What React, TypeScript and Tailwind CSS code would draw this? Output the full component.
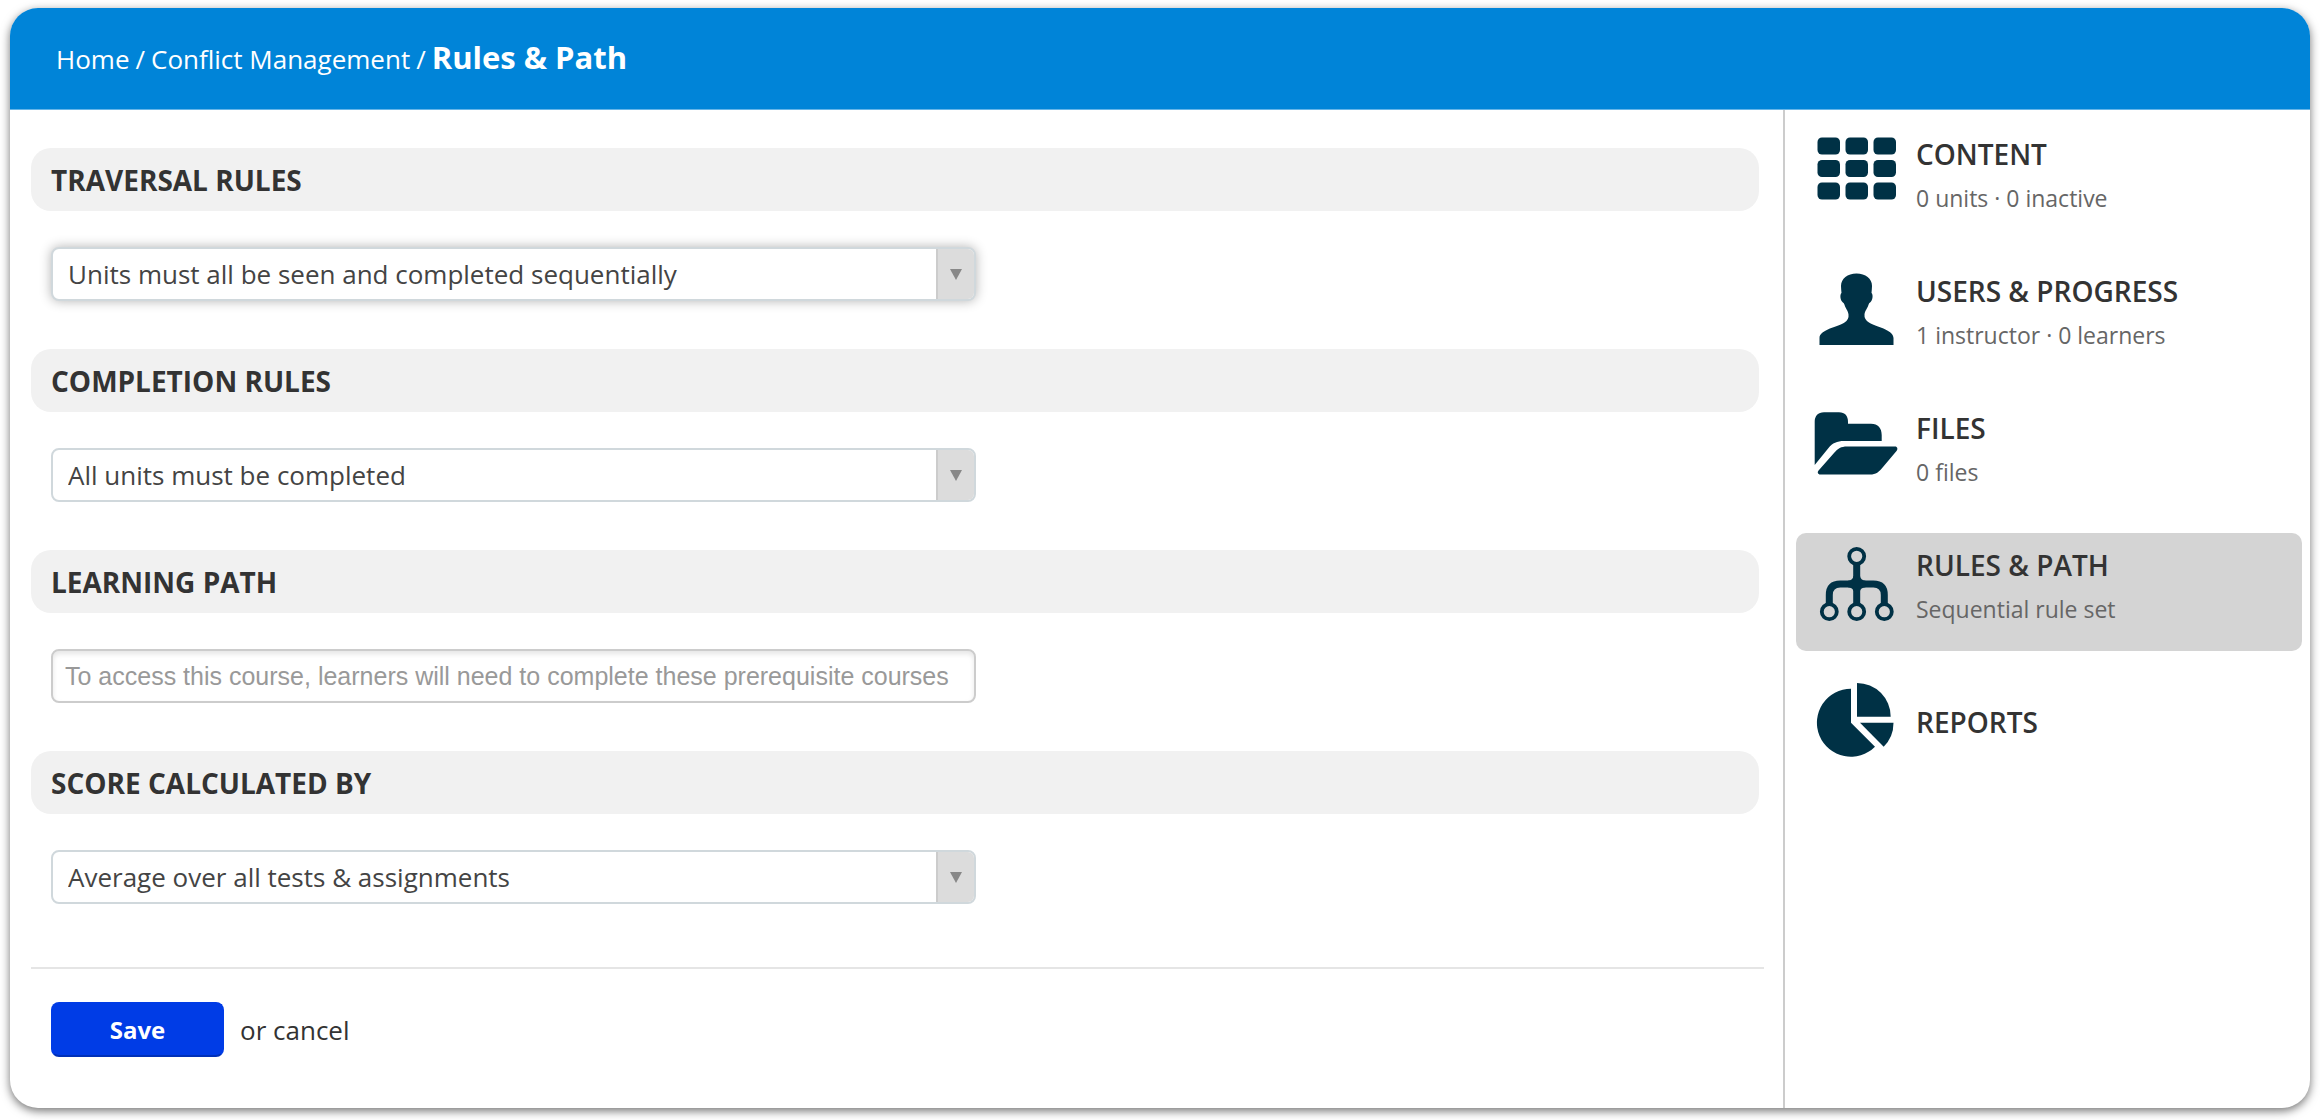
import React from "react";

const INK = "#003145";

function GridIcon() {
  const cells = [];
  for (let r = 0; r < 3; r++)
    for (let c = 0; c < 3; c++)
      cells.push(<rect key={r * 3 + c} x={3.5 + c * 28} y={6.5 + r * 22.5} width="22.5" height="17" rx="4.5" />);
  return <>{cells}</>;
}

function UserIcon() {
  return (
    <path d="M42.500 5.500 C51.500 5.500 58 10.500 58 18 C58 20.500 57.700 22.500 57.500 25 C59 26 59 31 57 33.500 C56.200 34.500 55.200 35 54.800 36 C53.500 40.500 51 42.500 50.500 46.500 C50 50 52 52.500 55 54.500 C61 58.500 79.500 61.500 79.500 70 V77 H5.500 V70 C5.500 61.500 25 58.500 30.500 54.500 C33.500 52.500 35 50 34.500 46.500 C34 42.500 31.500 40.500 30.200 36 C29.800 35 28.800 34.500 28 33.500 C26 31 26 26 27.500 25 C27.300 22.500 27 20.500 27 18 C27 10.500 33.500 5.500 42.500 5.500 Z" />
  );
}

function FolderIcon() {
  return (
    <>
      <path d="M0.700 60 V17 C0.700 11 4 7.300 10 7.300 H25 C31 7.300 34 11 34 17 V18.700 H57 C64 18.700 67.700 23 67.700 30 V36 H30 C23 36 18.500 38 14.500 43 Z" />
      <path d="M33 41.500 H81 C83.500 41.500 84 44 82.500 46 L69 62 C65 67 62 69.500 56 69.500 H6.500 C3.500 69.500 3 67 5 65 L20 48 C24 43.500 27 41.500 33 41.500 Z" />
    </>
  );
}

function TreeIcon() {
  return (
    <>
      <g fill="none" stroke={INK}>
        <path strokeWidth="7" d="M42.700 22 V62 M15.300 62 V53 Q15.300 42 26.300 42 H59.300 Q70.300 42 70.300 53 V62" />
        <g strokeWidth="3.800">
          <circle cx="42.700" cy="14.300" r="7.500" />
          <circle cx="15.300" cy="69.700" r="7.500" fill="#d4d4d4" />
          <circle cx="42.700" cy="69.700" r="7.500" fill="#d4d4d4" />
          <circle cx="70.300" cy="69.700" r="7.500" fill="#d4d4d4" />
        </g>
      </g>
      <path d="M39.500 34 Q39 38 34 38.800 V45.200 Q39 46 39.500 49 H46 Q46.500 46 51.500 45.200 V38.800 Q46.500 38 46 34 Z" />
    </>
  );
}

function PieIcon() {
  return (
    <>
      <path d="M37 9.700 V43.700 L61 67.700 A34 34 0 1 1 37 9.700 Z" />
      <path d="M43 4 A33.700 33.700 0 0 1 76.700 37.700 H43 Z" />
      <path d="M46 43.700 H79.500 A34 34 0 0 1 69.700 67.700 Z" />
    </>
  );
}

const items = [
  { title: "CONTENT", sub: "0 units · 0 inactive", icon: <GridIcon /> },
  { title: "USERS & PROGRESS", sub: "1 instructor · 0 learners", icon: <UserIcon /> },
  { title: "FILES", sub: "0 files", icon: <FolderIcon /> },
  { title: "RULES & PATH", sub: "Sequential rule set", icon: <TreeIcon />, active: true },
  { title: "REPORTS", sub: "", icon: <PieIcon /> },
];

function Section({ id, title, children }: { id: string; title: string; children: React.ReactNode }) {
  return (
    <section className="mb-12">
      <label
        htmlFor={id}
        className="mr-[5px] mb-9 flex h-[63px] items-center rounded-[20px] bg-[#f1f1f1] px-5 pt-px text-[28px] font-bold leading-9"
      >
        {title}
      </label>
      <div className="ml-5 max-w-[925px]">{children}</div>
    </section>
  );
}

function Select({ id, value, focused }: { id: string; value: string; focused?: boolean }) {
  return (
    <div
      className={
        "relative flex h-[54px] overflow-hidden rounded-lg border-2 border-[#d0d8dc] bg-white " +
        (focused ? "shadow-[0_0_12px_rgba(0,0,0,0.3)]" : "")
      }
    >
      <select id={id} className="min-w-0 flex-1 appearance-none bg-transparent pl-[15px] text-[26px] text-[#444] outline-none">
        <option>{value}</option>
      </select>
      <span className="pointer-events-none flex w-[38px] items-center justify-center border-l-2 border-[#ccc] bg-[#dcdcdc]">
        <svg width="12" height="11" viewBox="0 0 12 11" fill="#888" aria-hidden="true">
          <path d="M0 0 H12 L6 11 Z" />
        </svg>
      </span>
    </div>
  );
}

export default function App() {
  return (
    <div className="flex min-h-screen bg-white px-2.5 pt-2 pb-3 font-['Open_Sans',sans-serif] text-[#333]">
      <div className="flex flex-1 flex-col overflow-hidden rounded-[28px] bg-white shadow-[0_3px_10px_rgba(0,0,0,0.55)]">
        <header className="flex h-[102px] items-center border-b border-[#66b5e8] bg-[#0084d8] px-[46px] pb-0.5 text-white">
          <nav aria-label="Breadcrumb" className="flex items-baseline gap-1.5 text-[26px] leading-9">
            <a href="#home">Home</a>
            <span>/</span>
            <a href="#course">Conflict Management</a>
            <span>/</span>
            <h1 className="text-[31px] font-bold">Rules &amp; Path</h1>
          </nav>
        </header>
        <div className="flex flex-1">
          <main className="flex-1 pt-[38px] pr-[19px] pl-[21px]">
            <form onSubmit={(e) => e.preventDefault()}>
              <Section id="traversal" title="TRAVERSAL RULES">
                <Select id="traversal" value="Units must all be seen and completed sequentially" focused />
              </Section>
              <Section id="completion" title="COMPLETION RULES">
                <Select id="completion" value="All units must be completed" />
              </Section>
              <Section id="path" title="LEARNING PATH">
                <input
                  id="path"
                  type="text"
                  placeholder="To access this course, learners will need to complete these prerequisite courses"
                  className="block h-[54px] w-full rounded-lg border-2 border-[#ccc] px-3 font-['Liberation_Sans',sans-serif] text-[25px] shadow-[inset_0_3px_5px_rgba(0,0,0,0.1)] outline-none placeholder:text-[#999]"
                />
              </Section>
              <Section id="score" title="SCORE CALCULATED BY">
                <Select id="score" value="Average over all tests & assignments" />
              </Section>
              <div className="mt-[63px] flex items-center border-t-2 border-[#e5e5e5] pt-[33px] pl-5 text-[26px]">
                <button
                  type="submit"
                  className="h-[55px] w-[173px] rounded-lg border-2 border-[#003ce6] border-b-[#0030b8] bg-[#003ce6] text-2xl font-bold text-white"
                >
                  Save
                </button>
                <span className="ml-4 pt-0.5">
                  or <a href="#cancel">cancel</a>
                </span>
              </div>
            </form>
          </main>
          <aside className="w-[527px] border-l-2 border-[#ccc] pt-3 pr-2 pl-[11px]">
            <nav aria-label="Course" className="flex flex-col gap-[19px]">
              {items.map((it) => (
                <a
                  key={it.title}
                  href="#section"
                  aria-current={it.active ? "page" : undefined}
                  className={
                    "flex items-start gap-[18px] rounded-[10px] pt-[9px] pl-[18px] " +
                    (it.sub ? "h-[118px] " : "h-[104px] ") +
                    (it.active ? "bg-[#d4d4d4]" : "")
                  }
                >
                  <svg width="84" height="80" viewBox="0 0 84 80" fill={INK} aria-hidden="true" className="shrink-0">
                    {it.icon}
                  </svg>
                  <span className="flex min-h-[84px] flex-col justify-center pt-px">
                    <span className="text-[28px] font-semibold leading-11">{it.title}</span>
                    {it.sub && <span className="text-[23px] leading-11 text-[#666]">{it.sub}</span>}
                  </span>
                </a>
              ))}
            </nav>
          </aside>
        </div>
      </div>
    </div>
  );
}
